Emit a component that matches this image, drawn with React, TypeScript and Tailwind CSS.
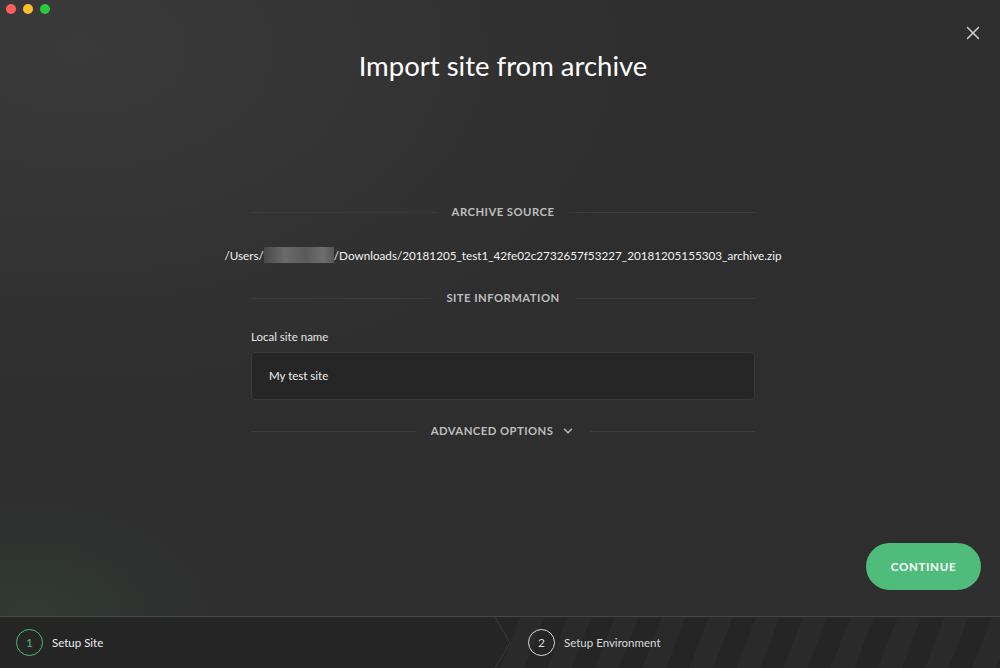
import { ChevronDown, X } from "lucide-react";

function SectionHeading({ label, chevron }: { label: string; chevron?: boolean }) {
  return (
    <div className="flex w-[504px] items-center gap-[15px]">
      <div className="h-px flex-1 bg-[#3b3b3b]" />
      <div className="flex items-center gap-[8px] text-[11.3px] font-bold uppercase leading-4 tracking-[0.04em] text-[#bdbdbd]">
        <span>{label}</span>
        {chevron && <ChevronDown className="h-[14px] w-[14px]" strokeWidth={2.5} />}
      </div>
      <div className="h-px flex-1 bg-[#3b3b3b]" />
    </div>
  );
}

function StepBadge({ n, active }: { n: number; active?: boolean }) {
  return (
    <span
      className={
        active
          ? "flex h-[27px] w-[27px] items-center justify-center rounded-full border-[1.5px] border-[#4cbb7a] text-[12px] text-[#4cbb7a]"
          : "flex h-[27px] w-[27px] items-center justify-center rounded-full border-[1.5px] border-[#d8d8d8] text-[12px] text-[#d8d8d8]"
      }
    >
      {n}
    </span>
  );
}

export default function App() {
  return (
    <div className="flex h-[668px] w-[1000px] flex-col overflow-hidden bg-[#2e2e2e] font-['Lato',sans-serif] text-white">
      {/* Main panel */}
      <div className="relative flex flex-1 flex-col bg-[radial-gradient(ellipse_at_8%_8%,#3a3a3a_0%,rgba(46,46,46,0)_45%),radial-gradient(ellipse_at_3%_100%,rgba(76,187,122,0.09)_0%,rgba(46,46,46,0)_14%)] pl-[6px]">
        {/* Window controls */}
        <div className="absolute left-[6px] top-[4px] flex gap-[7px]">
          <span className="h-[10px] w-[10px] rounded-full bg-[#fe5f57]" />
          <span className="h-[10px] w-[10px] rounded-full bg-[#febc2e]" />
          <span className="h-[10px] w-[10px] rounded-full bg-[#28c840]" />
        </div>
        <button className="absolute right-[16px] top-[22px] text-[#d0d0d0]">
          <X className="h-[22px] w-[22px]" strokeWidth={1.6} />
        </button>

        <h1 className="pt-[50px] text-center text-[27.5px] leading-8 font-normal text-white">
          Import site from archive
        </h1>

        <div className="mt-[122px] flex flex-col items-center">
          <SectionHeading label="Archive Source" />
          <p className="mt-[27px] flex items-center whitespace-nowrap text-[11.7px] leading-4 text-[#f2f2f2]">
            <span>/Users/</span>
            <span className="h-[16px] w-[70px] bg-[linear-gradient(90deg,#4a4a4a,#6a6a6a_30%,#5a5a5a_60%,#6e6e6e_85%,#555)]" />
            <span>/Downloads/20181205_test1_42fe02c2732657f53227_20181205155303_archive.zip</span>
          </p>
          <div className="mt-[27px]">
            <SectionHeading label="Site Information" />
          </div>
          <div className="mt-[23px] flex w-[504px] flex-col">
            <label className="text-[11.5px] leading-4 text-[#e6e6e6]">Local site name</label>
            <div className="mt-[7px] flex h-[48px] items-center rounded-[4px] border border-[#3a3a3a] bg-[#262626] px-[17px] text-[11.5px] text-[#f0f0f0]">
              My test site
            </div>
          </div>
          <div className="mt-[23px]">
            <SectionHeading label="Advanced Options" chevron />
          </div>
        </div>

        <div className="flex flex-1 items-end justify-end pb-[26px] pr-[19px]">
          <button className="h-[47px] w-[115px] rounded-full bg-[#50bc7b] text-[11.5px] font-bold tracking-[0.06em] text-white">
            CONTINUE
          </button>
        </div>
      </div>

      {/* Steps footer */}
      <div className="relative flex h-[52px] border-t border-[#474747] bg-[#252525]">
        <div className="flex w-[497px] items-center gap-[9px] pl-[16px] text-[11.5px] text-[#ececec]">
          <StepBadge n={1} active />
          <span>Setup Site</span>
        </div>
        <div className="flex flex-1 items-center gap-[9px] bg-[repeating-linear-gradient(111deg,#252525_0px,#252525_22px,#2a2a2a_22px,#2a2a2a_44px)] pl-[31px] text-[11.5px] text-[#dcdcdc]">
          <StepBadge n={2} />
          <span>Setup Environment</span>
        </div>
        <svg className="absolute left-[494px] top-0 h-[51px] w-[18px]" viewBox="0 0 18 51">
          <polygon points="0,0 1,0 16,26 1,51 0,51" fill="#252525" />
          <polyline points="1,0 16,26 1,51" fill="none" stroke="#3a3a3a" strokeWidth="1" />
        </svg>
      </div>
    </div>
  );
}
